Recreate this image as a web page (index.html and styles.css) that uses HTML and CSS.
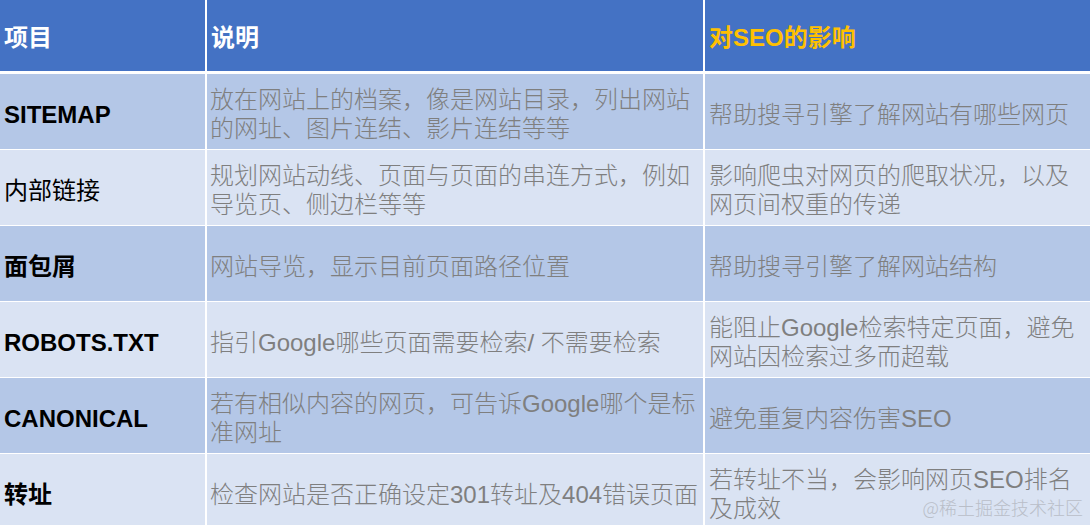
FILE: index.html
```html
<!DOCTYPE html>
<html lang="zh-CN">
<head>
<meta charset="utf-8">
<title>SEO</title>
<link rel="stylesheet" href="styles.css">
</head>
<body>
<div class="page">
  <div class="grid">
    <div class="cell head">项目</div>
    <div class="cell head">说明</div>
    <div class="cell head gold">对SEO的影响</div>

    <div class="cell dark name">SITEMAP</div>
    <div class="cell dark txt">放在网站上的档案，像是网站目录，列出网站<br>的网址、图片连结、影片连结等等</div>
    <div class="cell dark txt">帮助搜寻引擎了解网站有哪些网页</div>

    <div class="cell light name regular">内部链接</div>
    <div class="cell light txt">规划网站动线、页面与页面的串连方式，例如<br>导览页、侧边栏等等</div>
    <div class="cell light txt">影响爬虫对网页的爬取状况，以及<br>网页间权重的传递</div>

    <div class="cell dark name">面包屑</div>
    <div class="cell dark txt">网站导览，显示目前页面路径位置</div>
    <div class="cell dark txt">帮助搜寻引擎了解网站结构</div>

    <div class="cell light name">ROBOTS.TXT</div>
    <div class="cell light txt">指引Google哪些页面需要检索/ 不需要检索</div>
    <div class="cell light txt">能阻止Google检索特定页面，避免<br>网站因检索过多而超载</div>

    <div class="cell dark name">CANONICAL</div>
    <div class="cell dark txt">若有相似内容的网页，可告诉Google哪个是标<br>准网址</div>
    <div class="cell dark txt">避免重复内容伤害SEO</div>

    <div class="cell light name">转址</div>
    <div class="cell light txt">检查网站是否正确设定301转址及404错误页面</div>
    <div class="cell light txt">若转址不当，会影响网页SEO排名<br>及成效</div>
  </div>
  <div class="watermark">@稀土掘金技术社区</div>
</div>
</body>
</html>
```

FILE: styles.css
```css
html, body {
  margin: 0;
  padding: 0;
  background: #ffffff;
}

.page {
  position: relative;
  width: 1090px;
  height: 525px;
  overflow: hidden;
}

.grid {
  display: grid;
  grid-template-columns: 205px 496px 1fr;
  grid-template-rows: 73px repeat(6, 75px);
  column-gap: 2px;
  row-gap: 1px;
  background: #ffffff;
  font-family: "Liberation Sans", "Noto Sans CJK SC", sans-serif;
  font-size: 24px;
}

.cell {
  display: flex;
  flex-direction: column;
  justify-content: center;
  padding: 5px 4px 0 4px;
  line-height: 29px;
}

.head {
  background: #4472c4;
  color: #ffffff;
  font-weight: bold;
  margin-bottom: 2px;
  padding-top: 3px;
  padding-left: 4px;
}

.gold {
  color: #ffc000;
}

.dark {
  background: #b4c7e7;
}

.light {
  background: #dae3f3;
}

.name {
  color: #000000;
  font-weight: bold;
  padding-left: 4px;
}

.regular {
  font-weight: normal;
}

.txt {
  color: #7f7f7f;
  font-weight: 300;
  padding-left: 3px;
}

.grid .txt:nth-child(3n) {
  padding-left: 4px;
}

.watermark {
  position: absolute;
  right: 7px;
  bottom: 8px;
  font-family: "Noto Sans CJK SC", sans-serif;
  font-size: 18px;
  line-height: 20px;
  color: #b9bec8;
  font-weight: 300;
}
```
